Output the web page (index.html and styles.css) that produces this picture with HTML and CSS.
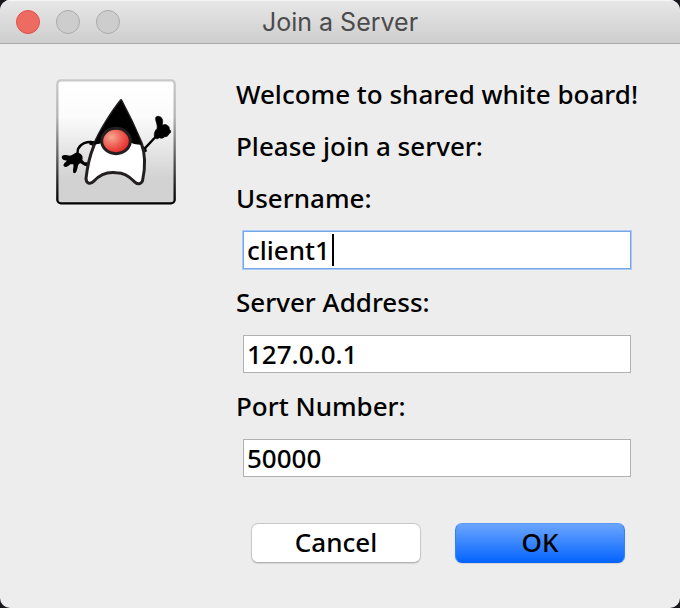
FILE: index.html
```html
<!DOCTYPE html>
<html lang="en">
<head>
<meta charset="utf-8">
<title>Join a Server</title>
<link rel="stylesheet" href="styles.css">
</head>
<body>
<main class="window">
  <header class="titlebar">
    <div class="lights">
      <button class="light light-close" type="button" aria-label="Close"></button>
      <button class="light" type="button" aria-label="Minimize" disabled></button>
      <button class="light" type="button" aria-label="Zoom" disabled></button>
    </div>
    <h1 class="title">Join a Server</h1>
  </header>
  <form class="dialog">
    <svg class="duke" viewBox="32 26 360 378" aria-hidden="true">
      <defs>
        <linearGradient id="tile" x1="0" y1="0" x2="0" y2="1">
          <stop offset="0" stop-color="#fff"/>
          <stop offset=".3" stop-color="#fbfbfb"/>
          <stop offset=".8" stop-color="#d2d2d2"/>
          <stop offset="1" stop-color="#d2d2d2"/>
        </linearGradient>
        <linearGradient id="edge" x1="0" y1="0" x2="0" y2="1">
          <stop offset="0" stop-color="#c9c9c9"/>
          <stop offset=".3" stop-color="#b4b4b4"/>
          <stop offset=".85" stop-color="#222"/>
          <stop offset="1" stop-color="#000"/>
        </linearGradient>
        <radialGradient id="nose" cx=".35" cy=".35" r=".65">
          <stop offset="0" stop-color="#f7a992"/>
          <stop offset=".55" stop-color="#ee5f54"/>
          <stop offset="1" stop-color="#e62c2c"/>
        </radialGradient>
      </defs>
      <rect x="36" y="30" width="352" height="369" rx="11" fill="url(#tile)" stroke="url(#edge)" stroke-width="7"/>
      <path d="M145 216C125 212 105 220 98 236L95 258M295 238L336 194" fill="none" stroke="#000" stroke-width="7"/>
      <path d="M134 211l16 2-7 14-12-5zM104 262l14 14 8 0 6 14-14-4-20-12zM288 224l14 8 3 11-14 7z"/>
      <path d="M98 247C89 244 84 255 74 256C65 256 57 251 50 257C46 267 57 270 65 271C60 276 53 280 55 287C61 294 69 287 75 282L84 282C86 290 81 300 84 308C90 310 94 304 95 298C98 289 97 285 101 281C109 276 114 267 111 257C108 250 103 248 98 247Z"/>
      <path d="M330 204C324 196 327 182 335 175C339 165 329 152 331 142C335 135 347 138 350 145C354 150 351 158 351 165C357 161 363 162 367 166C372 168 372 173 372 177C378 181 377 189 371 190C369 197 363 200 358 199C352 205 345 204 342 202C338 206 334 206 330 204Z" stroke="#000" stroke-width="2"/>
      <path d="M227 91C201 123 163 183 146 225C133 257 125 296 122 325C123 342 137 342 146 332C163 313 188 304 213 307C237 307 254 320 266 333C277 344 289 342 292 329C300 291 300 251 288 219C272 181 248 130 227 91Z" fill="#fff" stroke="#231f20" stroke-width="9" stroke-linejoin="round"/>
      <path d="M227 91C201 123 163 183 146 222Q164 222 174 214L250 214Q270 225 289 223C276 184 248 130 227 91Z"/>
      <ellipse cx="212" cy="212" rx="43" ry="38" fill="url(#nose)" stroke="#231f20" stroke-width="9"/>
    </svg>
    <div class="content">
      <p class="line">Welcome to shared white board!</p>
      <p class="line">Please join a server:</p>
      <label class="line" for="username">Username:</label>
      <div class="field field-active">
        <input id="username" type="text" value="client1">
        <span class="caret"></span>
      </div>
      <label class="line" for="address">Server Address:</label>
      <div class="field"><input id="address" type="text" value="127.0.0.1"></div>
      <label class="line" for="port">Port Number:</label>
      <div class="field"><input id="port" type="text" value="50000"></div>
      <div class="actions">
        <button class="btn" type="button">Cancel</button>
        <button class="btn btn-primary" type="button">OK</button>
      </div>
    </div>
  </form>
</main>
</body>
</html>
```

FILE: styles.css
```css
* {
  box-sizing: border-box;
}

body {
  margin: 0;
  background: #17171c;
  color: #000;
  font: 500 26px/32px "Lucida Grande", "Noto Sans", sans-serif;
}

.window {
  min-height: 100vh;
  overflow: hidden;
  border-radius: 10px;
  background: #ededed;
}

.titlebar {
  display: grid;
  grid-template-columns: 1fr auto 1fr;
  align-items: center;
  height: 44px;
  padding: 0 16px;
  border-bottom: 1px solid #a9a9a9;
  background: linear-gradient(#e7e7e7, #cecece);
  box-shadow: inset 0 1px #f5f5f5;
}

.lights {
  display: flex;
  gap: 16px;
}

.light {
  width: 24px;
  height: 24px;
  padding: 0;
  border: 1px solid #aaa;
  border-radius: 50%;
  background: #cdcdcd;
}

.light-close {
  border-color: #dc5349;
  background: #ed6b60;
}

.title {
  margin: 0;
  color: #4b4b4b;
  font: 400 25px/32px Inter, sans-serif;
}

.dialog {
  display: flex;
  align-items: flex-start;
  gap: 60px;
  padding: 24px 42px 40px 56px;
}

.duke {
  flex: none;
  width: 120px;
  height: 126px;
  margin-top: 11px;
}

.content {
  flex: 1;
  min-width: 0;
}

.line {
  display: flex;
  align-items: center;
  height: 52px;
  margin: 0;
  white-space: nowrap;
}

.field {
  position: relative;
  display: flex;
  align-items: center;
  height: 52px;
  padding: 0 7px;
}

.field input {
  width: 100%;
  height: 38px;
  padding: 0 3px;
  border: 1px solid #b0b0b0;
  border-radius: 0;
  outline: none;
  background: #fff;
  color: inherit;
  font: inherit;
}

.field-active input {
  border-color: #74a7e6;
  box-shadow: 0 0 0 1px #a9cbf5;
}

.caret {
  position: absolute;
  top: 10px;
  left: 96px;
  width: 2px;
  height: 32px;
  background: #000;
}

.actions {
  display: flex;
  gap: 34px;
  margin-top: 39px;
  padding: 0 13px 0 15px;
}

.btn {
  flex: 1;
  height: 40px;
  padding: 0 0 2px;
  border: 1px solid #c8c8c8;
  border-bottom-color: #b2b2b2;
  border-radius: 7px;
  background: #fff;
  color: #000;
  font: inherit;
  box-shadow: 0 1px 1px #d4d4d4;
}

.btn-primary {
  border-color: #5a98fa #3280fc #0763fb;
  background: linear-gradient(#6ba5fd, #0565ff);
}
```
